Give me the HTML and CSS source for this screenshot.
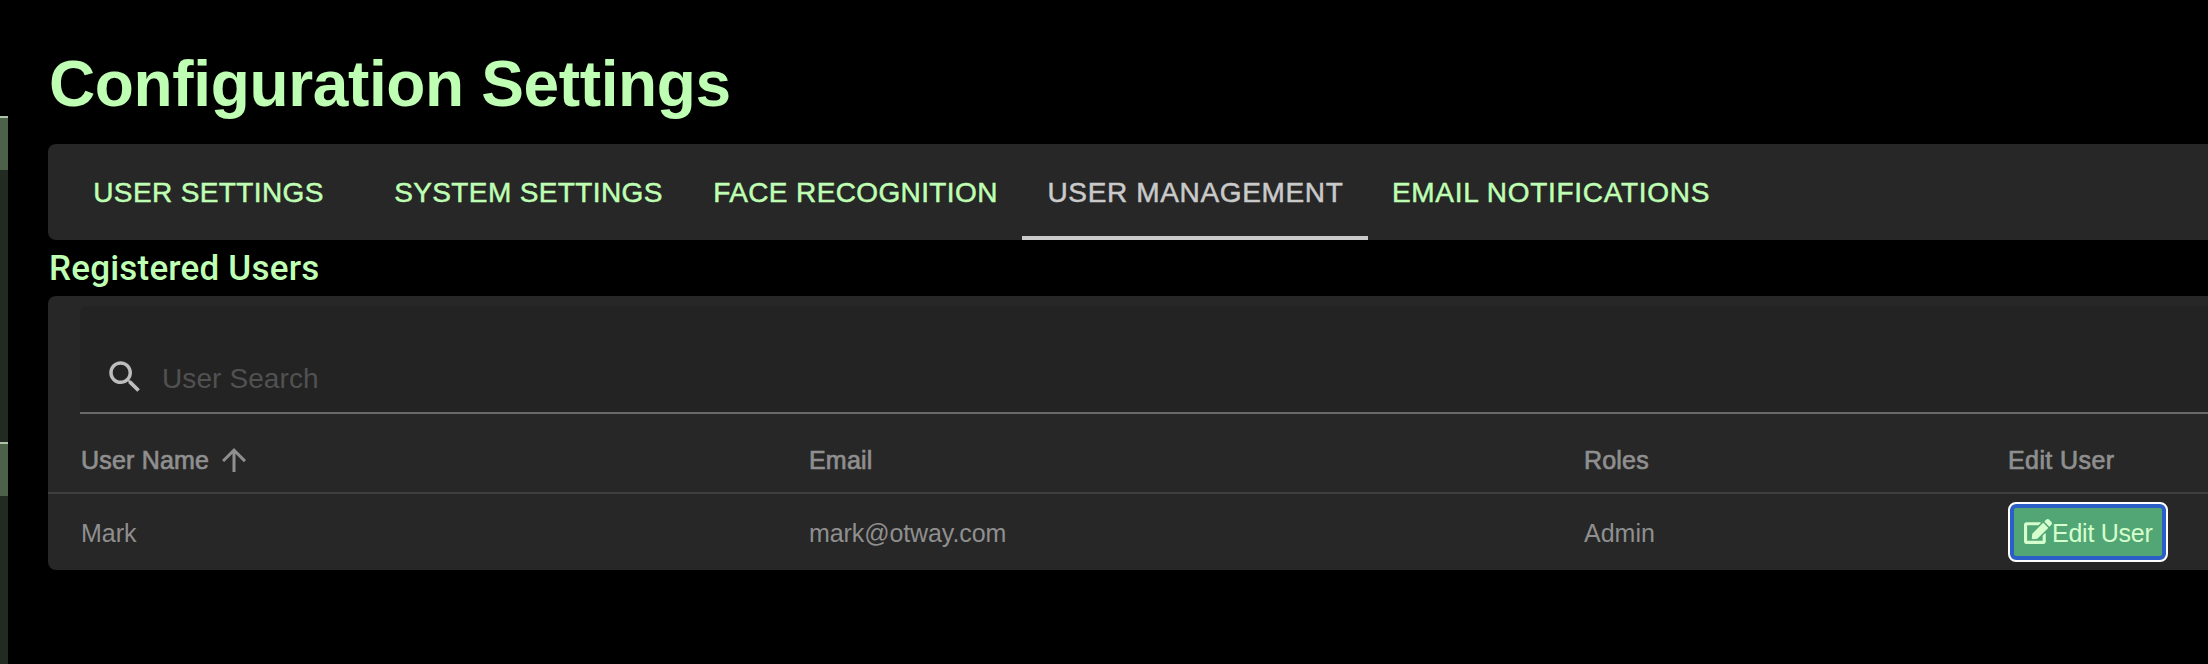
FILE: index.html
```html
<!DOCTYPE html>
<html lang="en">
<head>
<meta charset="utf-8">
<title>Configuration Settings</title>
<link rel="stylesheet" href="styles.css">
</head>
<body>
<div class="app">
  <aside class="rail">
    <div class="rail-section rail-first"><div class="rail-head"></div></div>
    <div class="rail-section rail-second"><div class="rail-head"></div></div>
  </aside>
  <main class="main">
    <h1 class="title"><span>Configuration Settings</span></h1>
    <nav class="tabs">
      <div class="tab"><span>USER SETTINGS</span></div>
      <div class="tab"><span>SYSTEM SETTINGS</span></div>
      <div class="tab tab-face"><span>FACE RECOGNITION</span></div>
      <div class="tab tab-users active"><span>USER MANAGEMENT</span></div>
      <div class="tab tab-email"><span>EMAIL NOTIFICATIONS</span></div>
    </nav>
    <h2 class="subtitle"><span>Registered Users</span></h2>
    <section class="card">
      <label class="search">
        <svg class="search-icon" viewBox="0 0 24 24"><path d="M15.5 14h-.79l-.28-.27C15.41 12.59 16 11.11 16 9.5 16 5.91 13.09 3 9.5 3S3 5.91 3 9.5 5.91 16 9.5 16c1.61 0 3.09-.59 4.23-1.57l.27.28v.79l5 4.99L20.49 19l-4.99-5zm-6 0C7.01 14 5 11.99 5 9.5S7.01 5 9.5 5 14 7.01 14 9.5 11.99 14 9.5 14z"/></svg>
        <span class="placeholder">User Search</span>
      </label>
      <div class="row head">
        <div class="cell"><span>User Name</span><svg class="sort-icon" viewBox="0 0 24 24"><path d="M4 12l1.41 1.41L11 7.83V20h2V7.83l5.58 5.59L20 12l-8-8-8 8z"/></svg></div>
        <div class="cell"><span>Email</span></div>
        <div class="cell"><span>Roles</span></div>
        <div class="cell cell-last"><span>Edit User</span></div>
      </div>
      <div class="row">
        <div class="cell"><span>Mark</span></div>
        <div class="cell cell-mail"><span>mark@otway.com</span></div>
        <div class="cell"><span>Admin</span></div>
        <div class="cell cell-action"><button class="edit"><svg class="edit-icon" viewBox="0 0 576 512"><path d="M402.6 83.2l90.2 90.2c3.800 3.800 3.800 10 0 13.800L274.400 405.600l-92.800 10.300c-12.400 1.400-22.900-9.100-21.500-21.500l10.300-92.800L388.800 83.200c3.800-3.800 10-3.800 13.800 0zm162-22.900l-48.800-48.800c-15.200-15.200-39.900-15.200-55.200 0l-35.400 35.400c-3.800 3.800-3.800 10 0 13.800l90.200 90.200c3.800 3.800 10 3.800 13.800 0l35.400-35.400c15.200-15.300 15.200-40 0-55.200zM384 346.200V448H64V128h229.800c3.200 0 6.200-1.300 8.500-3.500l40-40c7.600-7.600 2.200-20.500-8.500-20.500H48C21.500 64 0 85.500 0 112v352c0 26.500 21.500 48 48 48h352c26.500 0 48-21.500 48-48V306.200c0-10.700-12.900-16-20.500-8.500l-40 40c-2.200 2.300-3.500 5.300-3.500 8.500z"/></svg><span>Edit User</span></button></div>
      </div>
    </section>
  </main>
</div>
</body>
</html>
```
FILE: styles.css
```css
* { box-sizing: border-box; }
body {
  margin: 0;
  background: #000;
  font-family: "Liberation Sans", Arial, sans-serif;
  overflow: hidden;
}
.app { display: flex; height: 664px; }
.rail { width: 8px; padding-top: 116px; display: flex; flex-direction: column; flex: none; }
.rail-section { background: #222b22; border-top: 2px solid #adc4a7; }
.rail-first { height: 326px; }
.rail-second { flex: 1; }
.rail-head { height: 52px; background: #4d6149; }
.main { flex: 1; min-width: 0; padding-left: 40px; }
.title {
  margin: 0;
  height: 144px;
  padding: 47px 0 0 1px;
  font-size: 64px;
  line-height: 74px;
  font-weight: 700;
  letter-spacing: -0.36px;
  color: #bfffb3;
  white-space: nowrap;
}
.tabs {
  display: flex;
  height: 96px;
  background: #272727;
  border-radius: 8px 0 0 8px;
  color: #bfffb3;
  font-size: 28px;
  letter-spacing: 0.38px;
  -webkit-text-stroke: 0.5px currentColor;
}
.tab {
  width: 320px;
  display: flex;
  align-items: center;
  justify-content: center;
  white-space: nowrap;
  padding: 6px 0 0 1px;
  border-bottom: 4px solid transparent;
}
.tab-face { width: 334px; }
.tab-users { width: 346px; letter-spacing: 0.65px; }
.tab-email { width: 365px; letter-spacing: 0.7px; }
.tab.active { color: #cacaca; border-bottom-color: #cacaca; }
.subtitle {
  margin: 0;
  height: 56px;
  padding: 1px 0 0 1px;
  font: 500 35px/56px Roboto, sans-serif;
  letter-spacing: 0.2px;
  color: #bfffb3;
}
.card { height: 274px; background: #272727; border-radius: 8px 0 0 8px; padding-top: 10px; color: #8f8f8f; }
.search {
  display: flex;
  align-items: flex-start;
  height: 108px;
  margin-left: 32px;
  padding: 50px 0 0 24px;
  background: #232323;
  border-bottom: 2px solid #696969;
  border-radius: 8px 0 0 0;
}
.search-icon { width: 42px; height: 42px; fill: #bdbdbd; }
.placeholder { margin-left: 16px; padding-top: 7px; font-size: 28px; line-height: 32px; letter-spacing: 0.1px; color: #515151; }
.row {
  display: grid;
  grid-template-columns: 728px 775px 425px 200px;
  height: 76px;
  padding: 3px 0 0 32px;
  font-size: 25px;
}
.head { height: 80px; padding-top: 14px; border-bottom: 2px solid #3f3f3f; letter-spacing: 0.2px; -webkit-text-stroke: 0.7px currentColor; }
.cell { display: flex; align-items: center; white-space: nowrap; padding-left: 1px; }
.cell-mail { letter-spacing: -0.1px; }
.cell-last { padding-left: 0; letter-spacing: 0.4px; }
.cell-action { padding: 0 0 3px; }
.sort-icon { width: 36px; height: 36px; margin-left: 7px; fill: #8f8f8f; stroke: none; }
.edit {
  display: flex;
  align-items: center;
  width: 160px;
  height: 60px;
  padding: 3px 0 0 14px;
  border: 2px solid #fff;
  border-radius: 8px;
  background: #52a675;
  box-shadow: inset 0 0 0 4px #2b5fc7;
  color: #d5ffcc;
  font: 25px "Liberation Sans", Arial, sans-serif;
  letter-spacing: -0.25px;
}
.edit-icon { width: 28px; height: 25px; margin: 0 0 5px; fill: #d5ffcc; }
```
